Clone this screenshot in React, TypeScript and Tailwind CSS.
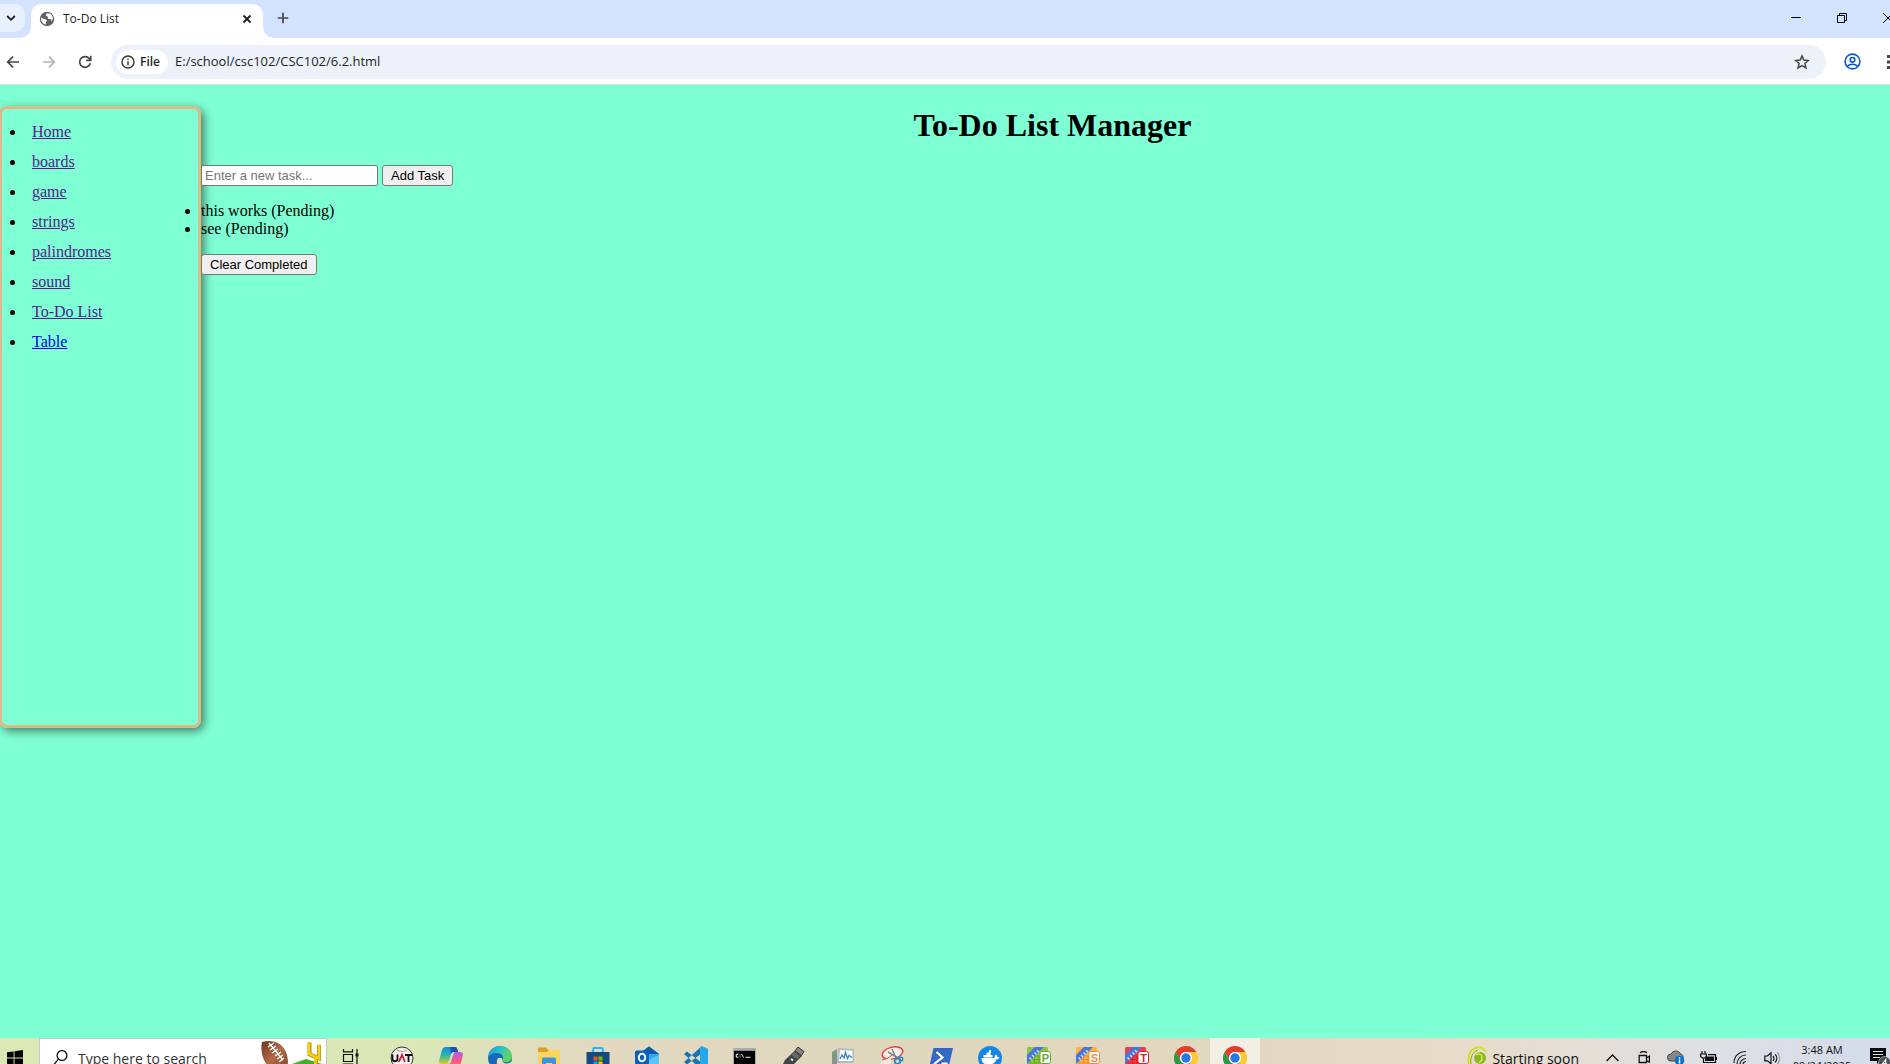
import React from "react";

type IconProps = { className?: string };

const links = ["Home", "boards", "game", "strings", "palindromes", "sound", "To-Do List"];
const tasks = ["this works (Pending)", "see (Pending)"];

/* ---------- browser icons ---------- */

const ChevronDown = () => (
  <svg width="10" height="10" viewBox="0 0 10 10" fill="none" stroke="#1f1f1f" strokeWidth="1.8">
    <path d="M1.2 3l3.8 3.8L8.8 3" />
  </svg>
);

const Globe = () => (
  <svg width="16" height="16" viewBox="0 0 16 16">
    <circle cx="8" cy="8" r="7.2" fill="#5f6368" />
    <path d="M2.6 6.6c1.2 1 2.3 1.6 3.6 1.7.9.1 1.6.6 1.5 1.5-.1.8-.9 1-.9 2l.1 1.8C4 13.100 2 10.600 2.100 8zM8.200 2.200c-.8.8-1.500 1.200-1.400 2 .1.900 1.200.7 1.700 1.400.6.800-.1 1.700.9 2.300.8.400 1.800-.2 2.500.4.500.4.400 1.300.2 2.100 1.400-1.200 2-2.800 1.600-4.500-.6-2.200-2.800-4-5.500-3.700z" fill="#fff" />
  </svg>
);

const CloseIcon = () => (
  <svg width="10" height="10" viewBox="0 0 10 10" stroke="#1f1f1f" strokeWidth="1.8">
    <path d="M1.500 1.500l7 7M8.500 1.500l-7 7" />
  </svg>
);

const PlusIcon = () => (
  <svg width="12" height="12" viewBox="0 0 12 12" stroke="#474747" strokeWidth="1.700">
    <path d="M6 .8v10.400M.8 6h10.400" />
  </svg>
);

const ArrowLeft = ({ className }: IconProps) => (
  <svg className={className} width="14" height="14" viewBox="0 0 14 14" fill="none" stroke="currentColor" strokeWidth="1.700">
    <path d="M13 7H2M7 1.700L1.700 7 7 12.300" />
  </svg>
);

const Reload = () => (
  <svg width="14" height="14" viewBox="0 0 14 14" fill="none" stroke="#474747" strokeWidth="1.700">
    <path d="M12.300 8.200A5.400 5.400 0 1 1 11.300 3.600L12.600 5" />
    <path d="M12.700 .800V5.300H8.200" />
  </svg>
);

const InfoIcon = () => (
  <svg width="14" height="14" viewBox="0 0 14 14" fill="none" stroke="#333" strokeWidth="1.400">
    <circle cx="7" cy="7" r="6" />
    <path d="M7 6.200v4M7 3.600V5" />
  </svg>
);

const Star = () => (
  <svg width="16" height="16" viewBox="0 0 16 16" fill="none" stroke="#474747" strokeWidth="1.500">
    <path d="M8 1.900l1.800 4.200 4.600.4-3.500 3 1.100 4.500L8 11.600 4 14l1.100-4.500-3.500-3 4.600-.4z" />
  </svg>
);

const Profile = () => (
  <svg width="17" height="17" viewBox="0 0 17 17" fill="none" stroke="#0b57d0" strokeWidth="1.600">
    <circle cx="8.500" cy="8.500" r="7.400" />
    <circle cx="8.500" cy="6.800" r="2.300" />
    <path d="M3.200 13.500c1.400-1.500 3.200-2.200 5.300-2.200s3.900.7 5.300 2.200" />
  </svg>
);

/* ---------- taskbar icons ---------- */

const WindowsLogo = () => (
  <svg width="16" height="16" viewBox="0 0 16 16">
    <path d="M0 2.300l6.600-.9v6.200H0zM7.500 1.200L16 0v7.600H7.500zM0 8.500h6.600v6.200L0 13.800zM7.500 8.500H16V16l-8.500-1.200z" />
  </svg>
);

const SearchIcon = () => (
  <svg width="15" height="16" viewBox="0 0 15 16" fill="none" stroke="#111" strokeWidth="1.300">
    <circle cx="9" cy="5.500" r="4.900" />
    <path d="M5.400 9.100L.6 15" />
  </svg>
);

const Football = () => (
  <svg width="66" height="40" viewBox="0 0 66 40">
    <defs>
      <linearGradient id="ball" x1="0" y1="0" x2="1" y2="1">
        <stop offset="0" stopColor="#6b3820" />
        <stop offset=".5" stopColor="#b06a48" />
        <stop offset="1" stopColor="#7d4327" />
      </linearGradient>
    </defs>
    <path d="M2 4c9-3 20 0 24 10 3 8 2 14 0 19-9 1-18-2-22-11C1 15 1 9 2 4z" fill="url(#ball)" />
    <g stroke="#fff" strokeWidth="1.300">
      <path d="M9 5l14 17M8 9l6-4M10 12l6-4M12 15l6-4M15 18l6-4M17 21l6-4M19 24l5-4" />
    </g>
    <path d="M32 26l14-5 16 5v14H32z" fill="#3fae29" />
    <path d="M49.500 4.500v11.800l9.500 4V7M56 20v12" fill="none" stroke="#b98a06" strokeWidth="4" />
    <path d="M49 4v12l10 4.500V6.500M55.500 20v12" fill="none" stroke="#f7cf13" strokeWidth="2.600" />
  </svg>
);

const TaskView = () => (
  <svg width="18" height="18" viewBox="0 0 18 18" fill="none" stroke="#111" strokeWidth="1.200">
    <path d="M1.500 0v2.800h9V0M1.500 18v-2.800h9V18M1.500 5.500h9v7h-9zM15 0v18" />
    <path d="M13.500 4.500h3v3h-3z" fill="#111" stroke="none" />
  </svg>
);

const Uat = () => (
  <svg width="24" height="24" viewBox="0 0 24 24">
    <circle cx="12" cy="12" r="11" fill="#f4f2ee" stroke="#333" strokeWidth="1" />
    <path d="M7 4c3 2 7 2 10 0M7 20c3-2 7-2 10 0" stroke="#c88" fill="none" />
    <path d="M2.500 8.500V13c0 3 5 3 5 0V8.500M15 9h7M18.500 9v7" stroke="#111" strokeWidth="1.800" fill="none" />
    <path d="M8.800 16l3.200-7 3 7" stroke="#c3203a" strokeWidth="1.800" fill="none" />
  </svg>
);

const Copilot = () => (
  <svg width="24" height="24" viewBox="0 0 24 24">
    <defs>
      <linearGradient id="cpa" x1="0" y1="0" x2="0" y2="1">
        <stop offset="0" stopColor="#1686e8" />
        <stop offset=".5" stopColor="#29b8a8" />
        <stop offset="1" stopColor="#e8c823" />
      </linearGradient>
      <linearGradient id="cpb" x1="0" y1="0" x2="0" y2="1">
        <stop offset="0" stopColor="#b45be8" />
        <stop offset=".5" stopColor="#f0588d" />
        <stop offset="1" stopColor="#f98c45" />
      </linearGradient>
    </defs>
    <path d="M7 1h9c1.500 0 2 1 2.500 3l.5 2h-4c-2 0-2.600 1-3.200 3l-2 6.500C9 18 8 18 6 18H3c-2.500 0-3.500-1.500-2.700-4.500L3 4c.8-2.300 2-3 4-3z" fill="url(#cpa)" />
    <path d="M11 1h5c1.500 0 2 1 2.500 3l.5 2h-4c-1.600 0-2.400.6-3 2z" fill="#1c50b5" />
    <path d="M18 6h3c2.500 0 3.500 1.500 2.700 4.500L21 20c-.8 2.300-2 3-4 3H8c-1.500 0-2-1-2.500-3L5 18h4c2 0 2.600-1 3.200-3l2-6.500C15 6 16 6 18 6z" fill="url(#cpb)" />
  </svg>
);

const Edge = () => (
  <svg width="24" height="24" viewBox="0 0 24 24">
    <defs>
      <linearGradient id="edg" x1="0" y1="0" x2="1" y2=".4">
        <stop offset="0" stopColor="#1d8fdc" />
        <stop offset=".5" stopColor="#2fc0cf" />
        <stop offset="1" stopColor="#62d65c" />
      </linearGradient>
    </defs>
    <circle cx="12" cy="12" r="12" fill="#1668b8" />
    <path d="M0 11.500C.5 5 5.500 0 12 0c7 0 12 5 12 10.500 0 3.500-2.600 5.700-5.800 5.700-2.600 0-4.200-1-4.200-2 0-.7 1-1.200 1-2.700C15 9 12.500 7 9 7c-4.500 0-7.500 2-9 4.500z" fill="url(#edg)" />
    <path d="M14 12c-.6 3 1.500 5.500 4.500 5.500 2 0 3.800-.8 5-2l.5 8.500H14C8 22 8 15 10 12z" fill="#e2dabd" />
  </svg>
);

const Folder = () => (
  <svg width="22" height="22" viewBox="0 0 22 22">
    <path d="M0 2c0-1 .5-1.500 1.500-1.500H8L10.500 3H21v6H0z" fill="#dd9f1f" />
    <path d="M0 7V5h8.500L11 3h10c.6 0 1 .4 1 1v16H0z" fill="#fcd462" />
    <path d="M4 20v-8c0-1 .6-1.500 1.500-1.500h11c1 0 1.500.5 1.500 1.500v8h-4v-4H8v4z" fill="#3f93dc" />
  </svg>
);

const Store = () => (
  <svg width="24" height="23" viewBox="0 0 24 23">
    <path d="M7.200 6V2c0-.7.300-1 1-1h7.600c.7 0 1 .3 1 1v4" fill="none" stroke="#27b6f0" strokeWidth="2" />
    <path d="M.5 5h23v15c0 2-1 3-3 3h-17c-2 0-3-1-3-3z" fill="#154a80" />
    <path d="M7.500 9.500h4v4h-4z" fill="#f25022" />
    <path d="M12.500 9.500h4v4h-4z" fill="#7fba00" />
    <path d="M7.500 14.500h4v4h-4z" fill="#00a4ef" />
    <path d="M12.500 14.500h4v4h-4z" fill="#ffb900" />
  </svg>
);

const Outlook = () => (
  <svg width="24" height="24" viewBox="0 0 24 24">
    <path d="M4 8l10-7.500L24 8v14H4z" fill="#1a6fc9" />
    <path d="M8 5l6-4.500L24 8l-8 5z" fill="#1257a6" />
    <path d="M14 8h10v7l-10 5z" fill="#36a8ee" />
    <path d="M13 14l11-5v13H8z" fill="#5cc5f7" />
    <rect x="0" y="4.500" width="14" height="14" rx="1.500" fill="#0f5fbe" />
    <ellipse cx="7" cy="11.500" rx="3.200" ry="3.800" fill="none" stroke="#fff" strokeWidth="2" />
  </svg>
);

const VsCode = () => (
  <svg width="24" height="24" viewBox="0 0 24 24">
    <path d="M0 8l3-2.500L18 17v7zM0 16l3 2.500L18 7V0z" fill="#1275b8" />
    <path d="M17.500 0L24 2.800v18.400L17.500 24 16 22.500V1.500z" fill="#25a6ee" />
  </svg>
);

const Cmd = () => (
  <svg width="23" height="20" viewBox="0 0 23 20">
    <path d="M0 0h23v20H0z" fill="#a8adb0" />
    <path d="M1 2.800h21V19H1z" fill="#050505" />
    <path d="M5.500 6.200H3.300v3h2.200M7 6.500v.8M7 8.400v.8M8.500 6l2 3.500M12.500 9.300h5" stroke="#eee" fill="none" />
  </svg>
);

const Usb = () => (
  <svg width="22" height="22" viewBox="0 0 22 22">
    <path d="M15 0l6 4.500-2.500 4L12 4z" fill="#858585" stroke="#333" />
    <path d="M12 3.500l7 5.500L8 20l-8-3 2-4z" fill="#424547" />
    <path d="M11.500 5l5.500 4.200-3 3L8.500 8z" fill="#66696b" />
    <path d="M8 12l2 1.500" stroke="#eee" strokeWidth="2" />
  </svg>
);

const Perf = () => (
  <svg width="24" height="22" viewBox="0 0 24 22">
    <path d="M1 5l5-3v18l-5-3z" fill="#8b9294" />
    <path d="M2 8h4M2 11h4" stroke="#45b93b" />
    <path d="M7 1l16 1v14H6z" fill="#b4babd" />
    <path d="M9 3l12.500.8V14H8z" fill="#f8fcff" />
    <path d="M9 12l2-4 2 3 1.500-5.500 2 6 1.500-3 3 2" fill="none" stroke="#3182bd" strokeWidth="1.300" />
    <path d="M2 17h20v3H2z" fill="#b2b7b9" />
  </svg>
);

const Snip = () => (
  <svg width="24" height="24" viewBox="0 0 24 24">
    <ellipse cx="12.500" cy="7" rx="10.500" ry="5.800" fill="#fbeeea" stroke="#e6423c" strokeWidth="1.500" transform="rotate(-14 12.500 7)" />
    <path d="M1 14l10-3v12H1z" fill="#f1e6dc" />
    <path d="M2 14c4-1 7-2 10-5" stroke="#e6423c" strokeWidth="1" fill="none" />
    <path d="M12 3l5 11M8 6l10 6" stroke="#7c868c" strokeWidth="1.500" />
    <circle cx="17.500" cy="15" r="2.800" fill="none" stroke="#2b8bc8" strokeWidth="1.800" />
    <circle cx="21" cy="13" r="1.800" fill="none" stroke="#2b8bc8" strokeWidth="1.500" />
  </svg>
);

const PowerShell = () => (
  <svg width="24" height="20" viewBox="0 0 24 20">
    <path d="M4.500 0H24l-4.500 20H0z" fill="#3468c4" />
    <path d="M7.500 4l6 5.500L5 16M12.500 15.500h6" stroke="#fff" strokeWidth="2.200" fill="none" />
  </svg>
);

const Docker = () => (
  <svg width="24" height="24" viewBox="0 0 24 24">
    <circle cx="12" cy="12" r="12" fill="#1585e8" />
    <path d="M3.500 12h13c0-1.500.3-3 1.500-3.500 1 .8 1.300 1.600 1.300 2.600 1 0 1.700.1 2.200.6-.7 1.200-1.700 1.500-3 1.500-1.500 4-4 5.300-8 5.300-4.500 0-7-2-7-6.500zM5.500 9h9v2.500h-9zM8.500 6.500h4V9h-4zM11 4h2v3h-2z" fill="#fff" />
  </svg>
);

const FreeOffice = ({ base, dark, letter }: { base: string; dark: string; letter: string }) => (
  <svg width="24" height="22" viewBox="0 0 24 22">
    <rect x="0" y="0" width="21" height="22" rx="1.500" fill={base} />
    <path d="M3 9h9v11H3zM3 12.500h9M3 16h9M7.500 9v11" stroke={dark} fill="none" />
    <path d="M8 0h9L0 17V8z" fill="#4876dd" />
    <path d="M2.500 10.500l2 2M5 8l2 2M7.500 5.500l2 2M10 3.300l2 2" stroke="#dfe8ff" strokeWidth="1.300" />
    <rect x="13" y="4.500" width="10.500" height="12" rx="2" fill="#fff" stroke={dark} />
    <text x="18.500" y="14.500" textAnchor="middle" fontSize="11" fontWeight="700" fontFamily="Liberation Sans" fill={dark}>
      {letter}
    </text>
  </svg>
);

const Chrome = () => (
  <svg width="24" height="24" viewBox="0 0 24 24">
    <path d="M1.600 6A12 12 0 0 1 22.400 6H12a6 6 0 0 0-5.200 9z" fill="#e33b2e" />
    <path d="M22.400 6A12 12 0 0 1 12 24l5.200-9A6 6 0 0 0 12 6z" fill="#fcc934" />
    <path d="M1.600 6A12 12 0 0 0 12 24l5.200-9a6 6 0 0 1-10.400 0z" fill="#2a9a48" />
    <circle cx="12" cy="12" r="6" fill="#fff" />
    <circle cx="12" cy="12" r="4.700" fill="#2b78e4" />
  </svg>
);

const Tennis = () => (
  <svg width="20" height="24" viewBox="0 0 20 24">
    <path d="M2.500 19C0 12 2 3 10 1.500c4-.8 7 1.500 8.500 4" fill="none" stroke="#d5df20" strokeWidth="2" />
    <path d="M4 19C3 12 5 6 11 4" fill="none" stroke="#8fa30e" />
    <circle cx="13" cy="12" r="6" fill="#8db920" />
    <path d="M8.500 9c3-2 6-1 6.500 2s-1 4.500-3 5.500" fill="none" stroke="#d6ec6d" strokeWidth="1.300" />
    <path d="M1 18h6v6H1z" fill="#a9bc1e" />
  </svg>
);

const TrayChevron = () => (
  <svg width="13" height="8" viewBox="0 0 13 8" fill="none" stroke="#111" strokeWidth="1.300">
    <path d="M.6 7l5.900-6 5.900 6" />
  </svg>
);

const MeetNow = () => (
  <svg width="13" height="14" viewBox="0 0 13 14" fill="none" stroke="#111" strokeWidth="1.300">
    <path d="M2 1.800c2-1.500 5-1.500 7 0M1.200 4.500h7.300v7H1.200zM8.500 7l2.900-1.800v6L8.500 9.500" />
  </svg>
);

const Cloud = () => (
  <svg width="18" height="16" viewBox="0 0 18 16">
    <path d="M4 11a3.500 3.500 0 0 1 0-7C6 0 12 0 13.500 4c2 .3 3 2 2.500 4l-4 3z" fill="#888" stroke="#444" />
    <circle cx="12.500" cy="10.500" r="4.800" fill="#0b72cc" />
    <path d="M12.500 9.500v4M12.500 7.200v1.500" stroke="#fff" strokeWidth="1.500" />
  </svg>
);

const Battery = () => (
  <svg width="17" height="14" viewBox="0 0 17 14" fill="none" stroke="#111" strokeWidth="1.200">
    <path d="M2 0v3M5 0v3M.6 3h5.800v2.500L4.500 7h-2L.6 5.500zM3.500 7v4.500h12V3.600H8" />
    <path d="M6 5.500h8v4.500H5V8z" fill="#111" stroke="none" />
    <path d="M16.400 6v3" />
  </svg>
);

const Wifi = () => (
  <svg width="15" height="16" viewBox="0 0 15 16" fill="none" stroke="#222" strokeWidth="1.200">
    <path d="M1 13C1 6 6 1.500 13 1.500M4 14c0-5 4-9 9-9M7 15c0-3.500 2.500-6.500 6-6.500M10 15c0-2 1-3.500 3-3.500" />
  </svg>
);

const Speaker = () => (
  <svg width="17" height="15" viewBox="0 0 17 15" fill="none" stroke="#111" strokeWidth="1.200">
    <path d="M.8 5h2.700L7 1.800v11L3.500 9.800H.8zM9 5c1 1.300 1 3.500 0 4.800M11.200 3.300c2 2.300 2 5.700 0 8" />
    <path d="M13.300 1.500c3 3.500 3 8.300 0 11.800" stroke="#999" />
  </svg>
);

const Notifications = () => (
  <svg width="20" height="20" viewBox="0 0 20 20">
    <path d="M0 0h16v13h-6l-3 3v-3H0z" fill="#0a0a0a" />
    <path d="M3 3.500h10M3 6.500h10M3 9.500h7" stroke="#d9dee8" strokeWidth="1.200" />
    <circle cx="14.500" cy="14.500" r="6" fill="#4a4d52" stroke="#d9dee8" strokeWidth=".6" />
    <path d="M15.800 17.500v-6l-3.300 4.200h4.500" stroke="#fff" fill="none" strokeWidth="1.100" />
  </svg>
);

const trayIcons: { name: string; icon: React.ReactNode }[] = [
  { name: "Show hidden icons", icon: <TrayChevron /> },
  { name: "Meet Now", icon: <MeetNow /> },
  { name: "OneDrive", icon: <Cloud /> },
  { name: "Battery", icon: <Battery /> },
  { name: "Network", icon: <Wifi /> },
  { name: "Volume", icon: <Speaker /> },
];

const apps: { name: string; icon: React.ReactNode; active?: boolean }[] = [
  { name: "UAT", icon: <Uat /> },
  { name: "Copilot", icon: <Copilot /> },
  { name: "Edge", icon: <Edge /> },
  { name: "File Explorer", icon: <Folder /> },
  { name: "Store", icon: <Store /> },
  { name: "Outlook", icon: <Outlook /> },
  { name: "Visual Studio Code", icon: <VsCode /> },
  { name: "Command Prompt", icon: <Cmd /> },
  { name: "USB tool", icon: <Usb /> },
  { name: "Performance", icon: <Perf /> },
  { name: "Snipping Tool", icon: <Snip /> },
  { name: "PowerShell", icon: <PowerShell /> },
  { name: "Docker", icon: <Docker /> },
  { name: "Planner", icon: <FreeOffice base="#8cc63e" dark="#6aa82a" letter="P" /> },
  { name: "Slides", icon: <FreeOffice base="#f9b23a" dark="#ef8a3c" letter="S" /> },
  { name: "Text", icon: <FreeOffice base="#e8404a" dark="#d81f2a" letter="T" /> },
  { name: "Chrome", icon: <Chrome /> },
  { name: "Chrome window", icon: <Chrome />, active: true },
];

/* ---------- sections ---------- */

function TabStrip() {
  return (
    <div className="flex h-[38px] shrink-0 items-start bg-[#d3e3fd]">
      <button aria-label="Search tabs" className="mt-1 flex h-7 w-[25px] items-center justify-center rounded-r-[10px] bg-[#e9f0fd] pr-1">
        <ChevronDown />
      </button>
      <div className="relative mt-1 ml-1.5 flex h-[34px] w-[232px] items-center rounded-t-[10px] bg-white pr-[11px] pb-1 pl-2">
        <span className="absolute bottom-0 -left-2.5 size-2.5 bg-[radial-gradient(circle_at_0_0,#d3e3fd_9px,white_10px)]" />
        <span className="absolute -right-2.5 bottom-0 size-2.5 bg-[radial-gradient(circle_at_100%_0,#d3e3fd_9px,white_10px)]" />
        <Globe />
        <span className="ml-2 grow text-[12px] text-[#1f1f1f]">To-Do List</span>
        <button aria-label="Close tab"><CloseIcon /></button>
      </div>
      <button aria-label="New tab" className="mt-3 ml-3.5"><PlusIcon /></button>
      <div className="mt-[13px] ml-auto flex items-center gap-9 pr-[11px]">
        <button aria-label="Minimize">
          <svg width="10" height="10" viewBox="0 0 10 10" stroke="#000"><path d="M0 4.500h10" /></svg>
        </button>
        <button aria-label="Restore">
          <svg width="10" height="10" viewBox="0 0 10 10" fill="none" stroke="#000"><path d="M.5 2.500h7v7h-7zM2.500 2.500v-2h7v7h-2" /></svg>
        </button>
        <button aria-label="Close window">
          <svg width="10" height="10" viewBox="0 0 10 10" stroke="#000"><path d="M0 0l10 10M10 0L0 10" /></svg>
        </button>
      </div>
    </div>
  );
}

function Toolbar() {
  return (
    <div className="flex h-[47px] shrink-0 items-center border-b border-[#d5dfdc] bg-white pt-px pl-1.5">
      <button aria-label="Back"><ArrowLeft className="text-[#474747]" /></button>
      <button aria-label="Forward" className="ml-[22px]"><ArrowLeft className="rotate-180 text-[#b4b4b4]" /></button>
      <button aria-label="Reload" className="ml-[22px]"><Reload /></button>
      <div className="ml-[19px] flex h-[34px] grow items-center rounded-full bg-[#ecf1fa] pr-4 pl-[5px]">
        <button className="flex h-6 items-center gap-[5px] rounded-full bg-white px-[5px] pr-2 text-[12px] font-semibold text-[#1f1f1f]">
          <InfoIcon />
          File
        </button>
        <input
          aria-label="Address"
          defaultValue="E:/school/csc102/CSC102/6.2.html"
          className="ml-[7px] min-w-0 grow bg-transparent text-[13px] text-[#1f1f1f] outline-none"
        />
        <button aria-label="Bookmark"><Star /></button>
      </div>
      <button aria-label="Profile" className="ml-[18px]"><Profile /></button>
      <button aria-label="Menu" className="ml-[26px] pr-3.5">
        <svg width="3" height="14" viewBox="0 0 3 14" fill="#474747">
          <path d="M0 0h3v3H0zM0 5.500h3v3H0zM0 11h3v3H0z" />
        </svg>
      </button>
    </div>
  );
}

const pushButton = "h-[21px] rounded-[3px] border border-[#767676] bg-[#efefef] font-['Liberation_Sans',sans-serif] text-[13px] leading-none text-black";

function Page() {
  return (
    <div className="flex grow items-start overflow-hidden bg-[#7fffd4] pt-[21px] font-['Liberation_Serif',serif] text-base text-black">
      <nav className="-ml-px h-[622px] w-[202px] shrink-0 rounded-lg border-3 border-[#deb887] pt-2 shadow-[3px_3px_10px_rgba(0,0,0,0.5)]">
        <ul className="list-disc pl-6">
          {links.map((l) => (
            <li key={l} className="leading-[30px]">
              <a href="#" className="px-1.5 text-[#551a8b] underline">{l}</a>
            </li>
          ))}
          <li className="leading-[30px]">
            <a href="#" className="px-1.5 text-[#0000ee] underline">Table</a>
          </li>
        </ul>
      </nav>
      <main className="relative grow">
        <h1 className="text-center text-[32px] leading-[38px] font-bold">To-Do List Manager</h1>
        <form className="mt-[21px] flex gap-1" onSubmit={(e) => e.preventDefault()}>
          <input
            aria-label="New task"
            placeholder="Enter a new task..."
            className="h-[21px] w-[177px] rounded-[2px] border border-[#767676] bg-white px-[3px] font-['Liberation_Sans',sans-serif] text-[13px] placeholder:text-[#757575]"
          />
          <button className={`${pushButton} px-2`}>Add Task</button>
        </form>
        <ul className="my-4 list-disc leading-[18px]">
          {tasks.map((t) => <li key={t}>{t}</li>)}
        </ul>
        <button className={`${pushButton} block px-2`}>Clear Completed</button>
      </main>
    </div>
  );
}

function Taskbar() {
  return (
    <div className="h-[26px] shrink-0 overflow-hidden">
      <div className="flex h-10 bg-[linear-gradient(90deg,#d9e8b4_0%,#dbe7b6_22%,#e3d9c2_31%,#dfd8bd_45%,#e2d7bf_62%,#e8dccb_78%,#dde0e4_90%,#d3dbec_100%)] text-[#111]">
        <button aria-label="Start" className="flex w-[39px] items-center pl-[7px]"><WindowsLogo /></button>
        <div className="flex w-72 items-center border border-[#c5c5c5] bg-white pl-[13px]">
          <SearchIcon />
          <input aria-label="Search" placeholder="Type here to search" className="ml-2.5 w-0 grow text-[14px] outline-none placeholder:text-[#333]" />
          <Football />
        </div>
        <button aria-label="Task view" className="flex w-12 items-center justify-center"><TaskView /></button>
        <div className="ml-0.5 flex">
          {apps.map((a) => (
            <button
              key={a.name}
              aria-label={a.name}
              className={a.active ? "flex w-[50px] items-center justify-center bg-[#f3efe4]" : "flex w-[49px] items-center justify-center"}
            >
              {a.icon}
            </button>
          ))}
        </div>
        <div className="ml-auto flex items-center pr-3.5">
          <button className="flex items-center gap-[5px] text-[14px]"><Tennis />Starting soon</button>
          <div className="ml-[17px] flex items-center">
            {trayIcons.map((t) => (
              <button key={t.name} aria-label={t.name} className="flex h-10 w-8 items-center justify-center">
                {t.icon}
              </button>
            ))}
          </div>
          <div className="ml-[5px] flex w-[58px] flex-col items-center text-[11px] leading-4 whitespace-nowrap">
            <span>3:48 AM</span>
            <span>09/24/2025</span>
          </div>
          <button aria-label="Notifications" className="ml-[19px]"><Notifications /></button>
        </div>
      </div>
    </div>
  );
}

export default function App() {
  return (
    <div className="h-screen overflow-hidden font-['Open_Sans','Noto_Sans',sans-serif]">
      <div className="-mr-3.5 flex h-full flex-col">
        <TabStrip />
        <Toolbar />
        <Page />
        <Taskbar />
      </div>
    </div>
  );
}
